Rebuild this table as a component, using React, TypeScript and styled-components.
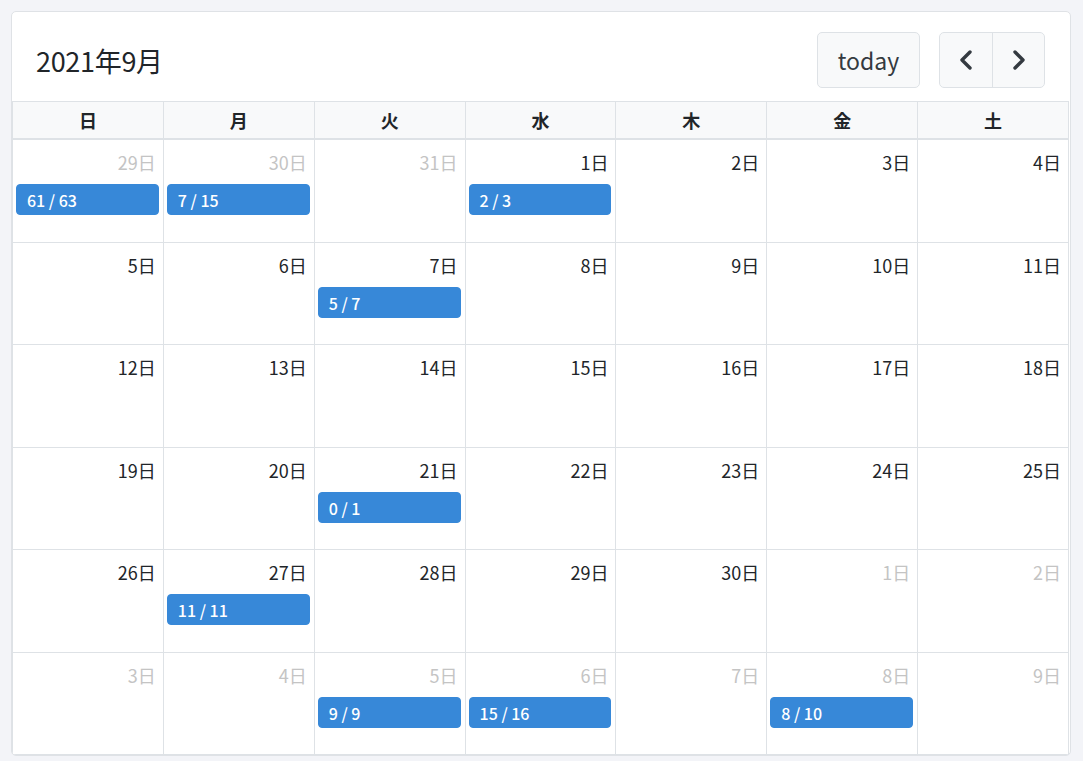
import React from "react";
import styled, { createGlobalStyle } from "styled-components";

const GlobalStyle = createGlobalStyle`
  html, body { margin: 0; padding: 0; background: #f3f4f8; }
  body { font-family: "Noto Sans CJK JP", "Noto Sans", sans-serif; color: #212529; }
  * { box-sizing: border-box; }
`;

const Page = styled.div`
  padding: 11px 13px 4px 11px;
`;

const Card = styled.div`
  width: 1060px;
  background: #fff;
  border: 1px solid #dfe2e6;
  border-radius: 5px;
  overflow: hidden;
`;

const Toolbar = styled.div`
  display: flex;
  align-items: center;
  justify-content: space-between;
  padding: 20px 25px 13px 24px;
`;

const Title = styled.h2`
  margin: 0;
  font-size: 27px;
  font-weight: 400;
  color: #212529;
  letter-spacing: -0.3px;
`;

const Controls = styled.div`
  display: flex;
  align-items: center;
  gap: 19px;
`;

const Button = styled.button<{ $w: number }>`
  width: ${(p) => p.$w}px;
  height: 56px;
  display: flex;
  align-items: center;
  justify-content: center;
  background: #f8f9fa;
  border: 1px solid #dee2e6;
  border-radius: 5px;
  font-family: "Noto Sans CJK JP", "Noto Sans", sans-serif;
  font-size: 23px;
  color: #343a40;
  padding: 0;
`;

const Group = styled.div`
  display: flex;
  border: 1px solid #dee2e6;
  border-radius: 5px;
  overflow: hidden;
  background: #f8f9fa;
`;

const GroupButton = styled.button<{ $divider?: boolean }>`
  width: 52px;
  height: 54px;
  display: flex;
  align-items: center;
  justify-content: center;
  background: transparent;
  border: none;
  border-left: ${(p) => (p.$divider ? "1px solid #dee2e6" : "none")};
  padding: 0;
`;

const Grid = styled.div`
  display: grid;
  grid-template-columns: repeat(7, 1fr);
  border-top: 1px solid #dee2e6;
  border-left: 1px solid #dee2e6;
  margin-right: 1px;
`;

const HeadCell = styled.div`
  height: 38px;
  display: flex;
  align-items: center;
  justify-content: center;
  background: #f8f9fa;
  border-right: 1px solid #dee2e6;
  border-bottom: 2px solid #dee2e6;
  font-size: 18px;
  font-weight: 700;
  color: #212529;
`;

const DayCell = styled.div`
  height: 102.5px;
  display: flex;
  flex-direction: column;
  border-right: 1px solid #dee2e6;
  border-bottom: 1px solid #dee2e6;
  padding: 9px 4px 0 3px;
`;

const DayNumber = styled.div<{ $other: boolean }>`
  text-align: right;
  font-size: 18px;
  line-height: 26px;
  padding-right: 3px;
  color: ${(p) => (p.$other ? "#c4c4c4" : "#212529")};
`;

const Event = styled.div`
  margin-top: 9px;
  height: 31px;
  line-height: 31px;
  background: #3788d8;
  border: 1px solid #3788d8;
  border-radius: 4px;
  color: #fff;
  font-size: 16px;
  font-weight: 500;
  padding-left: 10px;
`;

const Chevron = ({ dir }: { dir: "left" | "right" }) => (
  <svg width="14" height="20" viewBox="0 0 14 20" fill="none">
    <polyline
      points={dir === "left" ? "11,2 3,10 11,18" : "3,2 11,10 3,18"}
      stroke="#343a40"
      strokeWidth="3.4"
      strokeLinecap="round"
      strokeLinejoin="round"
    />
  </svg>
);

type Day = { n: number; other?: boolean; ev?: string };

const weeks: Day[][] = [
  [
    { n: 29, other: true, ev: "61 / 63" },
    { n: 30, other: true, ev: "7 / 15" },
    { n: 31, other: true },
    { n: 1, ev: "2 / 3" },
    { n: 2 },
    { n: 3 },
    { n: 4 },
  ],
  [{ n: 5 }, { n: 6 }, { n: 7, ev: "5 / 7" }, { n: 8 }, { n: 9 }, { n: 10 }, { n: 11 }],
  [{ n: 12 }, { n: 13 }, { n: 14 }, { n: 15 }, { n: 16 }, { n: 17 }, { n: 18 }],
  [{ n: 19 }, { n: 20 }, { n: 21, ev: "0 / 1" }, { n: 22 }, { n: 23 }, { n: 24 }, { n: 25 }],
  [
    { n: 26 },
    { n: 27, ev: "11 / 11" },
    { n: 28 },
    { n: 29 },
    { n: 30 },
    { n: 1, other: true },
    { n: 2, other: true },
  ],
  [
    { n: 3, other: true },
    { n: 4, other: true },
    { n: 5, other: true, ev: "9 / 9" },
    { n: 6, other: true, ev: "15 / 16" },
    { n: 7, other: true },
    { n: 8, other: true, ev: "8 / 10" },
    { n: 9, other: true },
  ],
];

const heads = ["日", "月", "火", "水", "木", "金", "土"];

export default function App() {
  return (
    <>
      <GlobalStyle />
      <Page>
        <Card>
          <Toolbar>
            <Title>2021年9月</Title>
            <Controls>
              <Button $w={103}>today</Button>
              <Group>
                <GroupButton>
                  <Chevron dir="left" />
                </GroupButton>
                <GroupButton $divider>
                  <Chevron dir="right" />
                </GroupButton>
              </Group>
            </Controls>
          </Toolbar>
          <Grid>
            {heads.map((h) => (
              <HeadCell key={h}>{h}</HeadCell>
            ))}
            {weeks.flat().map((d, i) => (
              <DayCell key={i}>
                <DayNumber $other={!!d.other}>{d.n}日</DayNumber>
                {d.ev && <Event>{d.ev}</Event>}
              </DayCell>
            ))}
          </Grid>
        </Card>
      </Page>
    </>
  );
}
